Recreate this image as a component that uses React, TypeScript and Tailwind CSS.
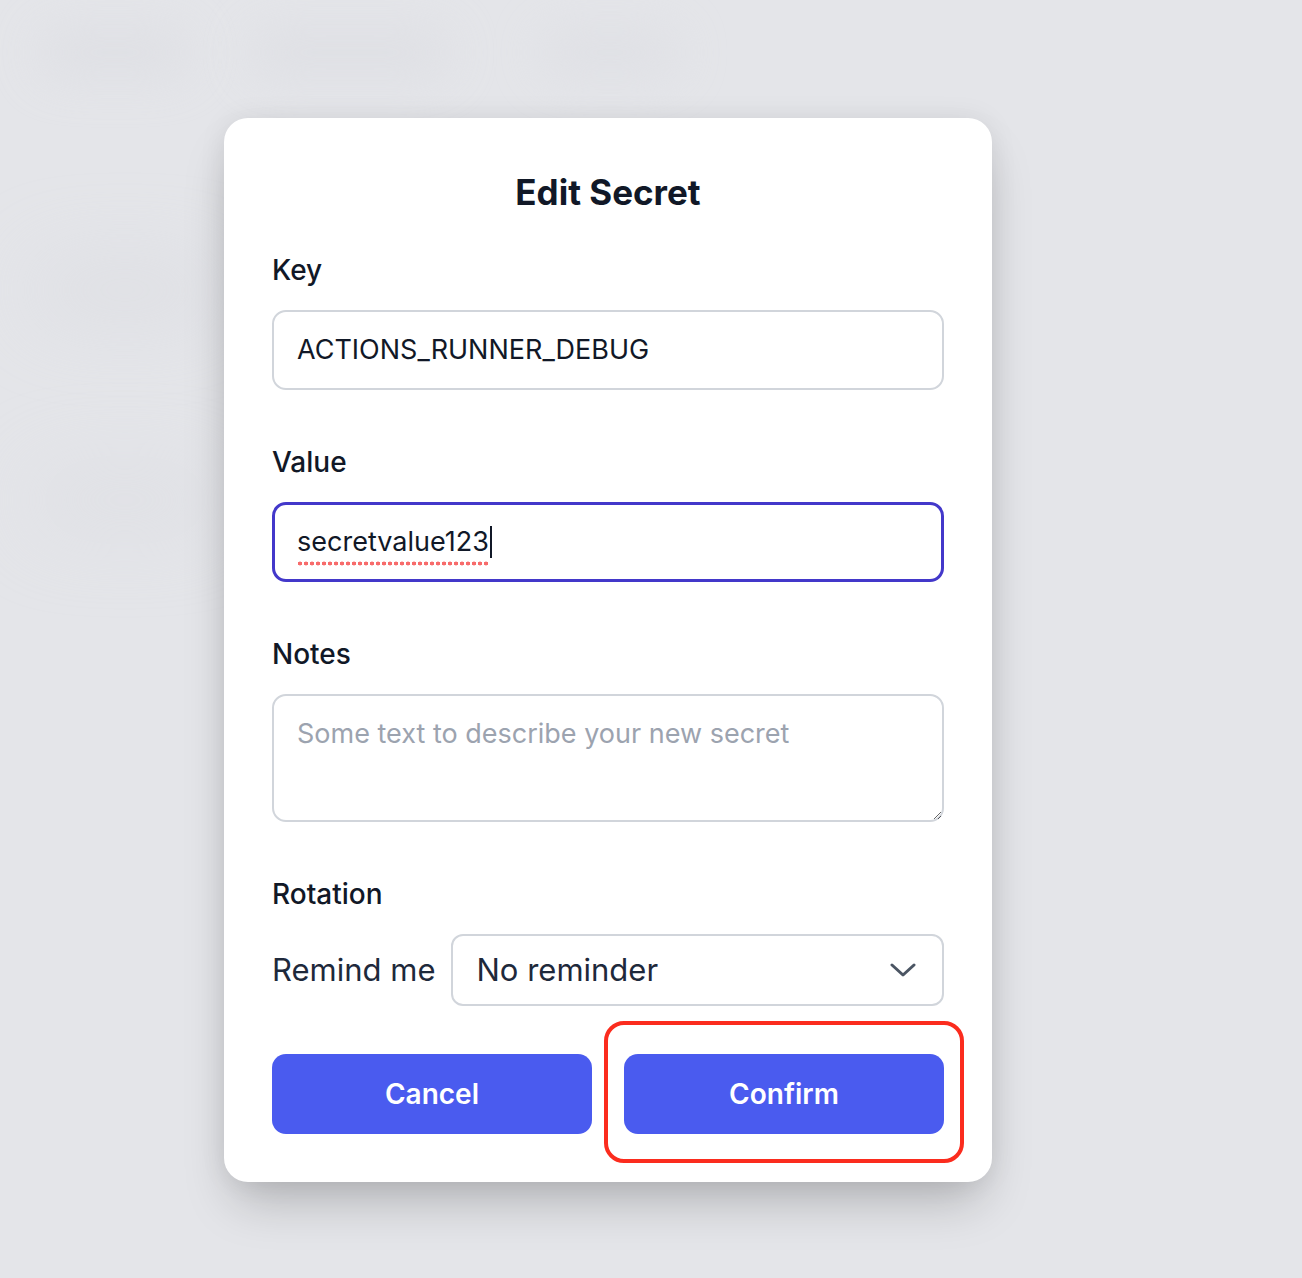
import React from 'react';

const Field: React.FC<{ label: string; children: React.ReactNode }> = ({ label, children }) => (
  <div className="flex flex-col">
    <label className="text-[28px] leading-9 font-medium text-[#111827] mb-[22px]">{label}</label>
    {children}
  </div>
);

const Backdrop: React.FC = () => (
  // blurred page behind the dialog
  <div className="absolute inset-0 overflow-hidden pointer-events-none">
    <div className="absolute left-[40px] top-[30px] w-[150px] h-[45px] rounded-full bg-[#dcdde2] blur-xl opacity-70" />
    <div className="absolute left-[250px] top-[30px] w-[200px] h-[45px] rounded-full bg-[#dcdde2] blur-xl opacity-70" />
    <div className="absolute left-[540px] top-[30px] w-[140px] h-[45px] rounded-full bg-[#dcdde2] blur-xl opacity-60" />
    <div className="absolute left-[30px] top-[260px] w-[190px] h-[60px] rounded-full bg-[#dadbe0] blur-2xl opacity-60" />
    <div className="absolute left-[30px] top-[470px] w-[190px] h-[60px] rounded-full bg-[#dadbe0] blur-2xl opacity-50" />
  </div>
);

export default function App() {
  return (
    <div
      className="relative min-h-[1278px] w-full bg-[#e4e5e9]"
      style={{ fontFamily: 'Inter, "Noto Sans", sans-serif' }}
    >
      <Backdrop />
      <div className="relative pl-[224px] pt-[118px]">
        <div className="w-[768px] bg-white rounded-[24px] px-12 pt-[54px] pb-12 shadow-[0_28px_50px_-10px_rgba(0,0,0,0.22),0_0_28px_rgba(0,0,0,0.07)]">
          <h2 className="text-center text-[35px] leading-10 font-bold text-[#111827] mb-10">Edit Secret</h2>

          <div className="flex flex-col gap-[54px]">
            <Field label="Key">
              <div className="h-20 rounded-[14px] border-2 border-[#d1d5db] px-[23px] flex items-center text-[27px] text-[#111827]">
                ACTIONS_RUNNER_DEBUG
              </div>
            </Field>

            <Field label="Value">
              <div className="h-20 rounded-[14px] border-[3px] border-[#4338ca] px-[22px] flex items-center text-[27px] text-[#111827]">
                <span className="relative">
                  secretvalue123
                  <span className="absolute left-0 right-0 -bottom-[4px] h-[5px] bg-[radial-gradient(circle,#f76b6b_1.8px,transparent_2.2px)] bg-[length:6px_5px] bg-repeat-x" />
                </span>
                <span className="w-[2px] h-[32px] bg-[#111827] ml-[1px]" />
              </div>
            </Field>

            <Field label="Notes">
              <textarea
                readOnly
                placeholder="Some text to describe your new secret"
                className="h-32 w-full rounded-[14px] border-2 border-[#d1d5db] px-[23px] pt-[20px] text-[27px] leading-9 text-[#111827] placeholder:text-[#9ca3af] outline-none resize-y"
              />
            </Field>

            <div className="flex flex-col">
              <span className="text-[28px] leading-9 font-medium text-[#111827] mb-[22px]">Rotation</span>
              <div className="flex items-center gap-4">
                <span className="text-[31px] text-[#1e293b]">Remind me</span>
                <div className="flex-1 h-[72px] rounded-[12px] border-2 border-[#d1d5db] pl-[23px] pr-[26px] flex items-center justify-between">
                  <span className="text-[31px] text-[#1e293b]">No reminder</span>
                  <svg width="26" height="16" viewBox="0 0 26 16" fill="none" stroke="#4b5563" strokeWidth="3" strokeLinecap="round" strokeLinejoin="round">
                    <path d="M2 3l11 10 11-10" />
                  </svg>
                </div>
              </div>
            </div>
          </div>

          <div className="grid grid-cols-2 gap-8 mt-12">
            <button className="h-20 rounded-[14px] bg-[#4a5bef] text-white text-[28px] font-semibold">Cancel</button>
            <div className="relative">
              <button className="w-full h-20 rounded-[14px] bg-[#4a5bef] text-white text-[28px] font-semibold">Confirm</button>
              <div className="absolute -left-5 -right-5 -top-[33px] -bottom-[29px] rounded-[20px] border-4 border-[#fb2c1e] pointer-events-none" />
            </div>
          </div>
        </div>
      </div>
    </div>
  );
}
